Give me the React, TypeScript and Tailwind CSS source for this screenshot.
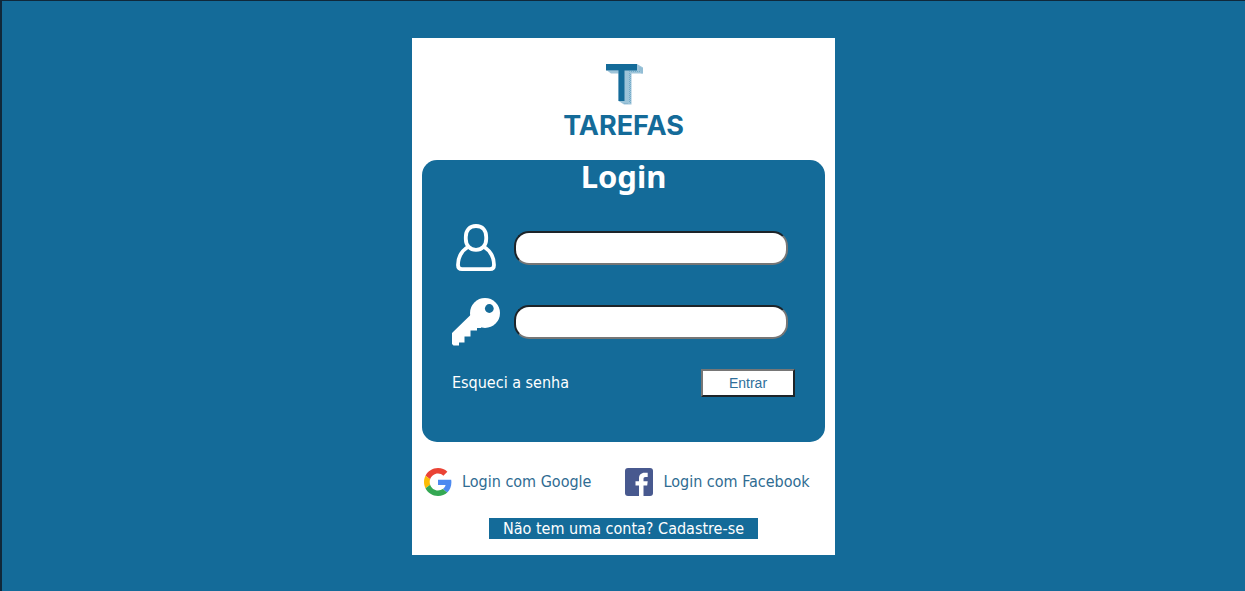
import type { ReactNode } from 'react';

function LogoMark() {
  return (
    <svg className="h-11 w-10" viewBox="0 0 40 44" aria-hidden="true">
      <path d="M33 2 39 5.500V11.500H27.500V42.500H20L14.500 39V11.500H7L3 8.500H20V8H33Z" fill="#9dc4d9" />
      <path d="M36 5.500V9.500H25.500V40.500M38 6.500V11.500M26.500 12V42M23.500 41.500H20" fill="none" stroke="#74abc9" strokeDasharray="1 1" />
      <path d="M2 2H33V8.500H20.500V39H14.500V8.500H2Z" fill="#146b99" />
    </svg>
  );
}

function UserIcon() {
  return (
    <svg className="h-12 w-12" viewBox="0 0 48 48" fill="none" stroke="#fff" strokeWidth="3.800" strokeLinejoin="round" aria-hidden="true">
      <path d="M24 2C30.500 2 34.200 6.500 34.200 13V15C34.200 21.500 30 25.800 24 25.800S13.800 21.500 13.800 15V13C13.800 6.500 17.500 2 24 2Z" />
      <path d="M16.500 22.500C10 26.500 6 33 6 41Q6 45.200 10 45.200H38Q42 45.200 42 41C42 33 38 26.500 31.500 22.500" />
    </svg>
  );
}

function KeyIcon() {
  return (
    <svg className="h-12 w-12" viewBox="0 0 48 48" aria-hidden="true">
      <circle cx="33" cy="15" r="15" fill="#fff" />
      <path fill="#fff" d="M18.500 17L0 35V46L1.500 47.500H7V44.500H12.500V38.500H18.500V32.500H25V30H29L33 15Z" />
      <circle cx="37.300" cy="10.500" r="4.400" fill="#146b99" />
    </svg>
  );
}

function GoogleIcon() {
  return (
    <svg className="h-7 w-7" viewBox="0 0 48 48" aria-hidden="true">
      <path fill="#EA4335" d="M24 9.500c3.540 0 6.710 1.220 9.210 3.600l6.850-6.850C35.900 2.380 30.470 0 24 0 14.620 0 6.510 5.380 2.560 13.220l7.980 6.190C12.430 13.720 17.740 9.500 24 9.500z" />
      <path fill="#4D8AF0" d="M46.980 24.550c0-1.570-.15-3.090-.38-4.550H24v9.020h12.940c-.58 2.960-2.260 5.480-4.780 7.180l7.730 6c4.510-4.180 7.090-10.360 7.090-17.650z" />
      <path fill="#FBBC05" d="M10.530 28.590c-.48-1.450-.76-2.990-.76-4.590s.27-3.140.76-4.590l-7.980-6.190C.92 16.460 0 20.120 0 24s.92 7.540 2.560 10.780l7.970-6.190z" />
      <path fill="#34A853" d="M24 48c6.480 0 11.930-2.130 15.890-5.810l-7.730-6c-2.150 1.450-4.920 2.300-8.160 2.300-6.260 0-11.570-4.220-13.470-9.910l-7.980 6.190C6.510 42.620 14.620 48 24 48z" />
    </svg>
  );
}

function FacebookIcon() {
  return (
    <svg className="h-7 w-7" viewBox="0 0 28 28" aria-hidden="true">
      <rect width="28" height="28" rx="3" fill="#48598f" />
      <path fill="#fff" d="M14 28V17.500H10.500V13.300H14V10.500C14 7 16.200 4.800 19.500 4.800H22.700V9H20.500C19 9 18.500 9.700 18.500 11V13.300H22.700L22.200 17.500H18.500V28Z" />
    </svg>
  );
}

function Field({ id, label, type, icon }: { id: string; label: string; type: string; icon: ReactNode }) {
  return (
    <div className="flex items-center gap-3.5">
      <label htmlFor={id} aria-label={label}>{icon}</label>
      <input
        id={id}
        type={type}
        className="h-[34px] w-[274px] rounded-[15px] border-2 border-t-[#1d2429] border-r-[#767676] border-b-[#767676] border-l-[#1d2429] bg-white px-3 text-black"
      />
    </div>
  );
}

export default function App() {
  return (
    <div className="min-h-screen border-t border-l-2 border-[#10283a] bg-[#146b99] pt-[37px] pb-9 font-['DejaVu_Sans_Condensed','Noto_Sans',sans-serif] text-base">
      <main className="mx-auto flex w-[423px] max-w-full flex-col items-center bg-white px-2.5 pt-6 pb-4">
        <LogoMark />
        <p className="mt-1 text-[27px] leading-8 font-bold text-[#146b99] font-['Inter',sans-serif]">TAREFAS</p>
        <form className="mt-[18px] flex w-full flex-col rounded-[15px] bg-[#146b99] px-[30px] pb-[45px] text-white" onSubmit={(e) => e.preventDefault()}>
          <h1 className="text-center text-[31px] leading-8 font-bold font-['Noto_Sans',sans-serif]">Login</h1>
          <div className="mt-8 flex flex-col gap-[26px]">
            <Field id="usuario" label="Usuário" type="text" icon={<UserIcon />} />
            <Field id="senha" label="Senha" type="password" icon={<KeyIcon />} />
          </div>
          <div className="mt-[23px] flex items-center justify-between">
            <a href="#senha">Esqueci a senha</a>
            <button
              type="submit"
              className="h-7 w-[94px] border-2 border-t-[#767676] border-r-[#1d2429] border-b-[#1d2429] border-l-[#767676] bg-white text-sm leading-5 text-[#2f6f9b] font-['Liberation_Sans',sans-serif]"
            >
              Entrar
            </button>
          </div>
        </form>
        <div className="mt-[26px] flex w-full flex-wrap items-center gap-x-[34px] pl-0.5 text-[#2f6c92]">
          <a href="#google" className="flex items-center gap-2.5"><GoogleIcon />Login com Google</a>
          <a href="#facebook" className="flex items-center gap-2.5"><FacebookIcon />Login com Facebook</a>
        </div>
        <a href="#cadastro" className="mt-[22px] bg-[#146b99] px-3.5 leading-[21px] text-white">Não tem uma conta? Cadastre-se</a>
      </main>
    </div>
  );
}
